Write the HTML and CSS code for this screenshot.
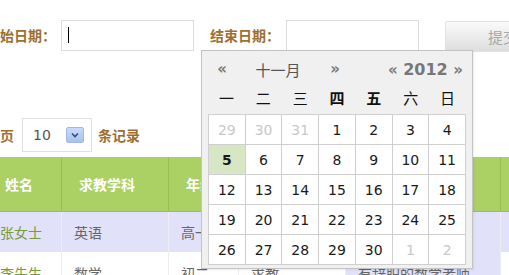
FILE: index.html
```html
<!DOCTYPE html>
<html lang="zh-CN">
<head>
    <meta charset="UTF-8">
    <title>求教信息</title>
    <link rel="stylesheet" href="styles.css">
</head>
<body>
    <div class="page">
        <!-- 查询条件 -->
        <form class="search">
            <label class="lbl">开始日期：</label>
            <span class="field">
                <input type="text" class="date-input">
                <span class="caret"></span>
            </span>
            <label class="lbl lbl-end">结束日期：</label>
            <input type="text" class="date-input date-end">
            <button type="button" class="btn">提交</button>
        </form>

        <!-- 每页条数 -->
        <div class="pager">
            <span class="lbl">每页</span>
            <div class="select">
                <span class="select-val">10</span>
                <span class="select-arrow">
                    <svg width="8" height="6" viewBox="0 0 8 6"><path d="M1 1.5 L4 4.5 L7 1.5" fill="none" stroke="#2b4f8a" stroke-width="1.6"/></svg>
                </span>
            </div>
            <span class="lbl">条记录</span>
        </div>

        <!-- 列表 -->
        <table class="list">
            <thead>
                <tr>
                    <th class="c1">姓名</th>
                    <th class="c2">求教学科</th>
                    <th class="c3">年级</th>
                    <th class="c4">地区</th>
                    <th class="c5">需求说明</th>
                    <th class="c6">操作</th>
                </tr>
            </thead>
            <tbody>
                <tr class="alt">
                    <td class="name">张女士</td>
                    <td>英语</td>
                    <td>高一</td>
                    <td>海淀</td>
                    <td>周末上门辅导</td>
                    <td>查看</td>
                </tr>
                <tr>
                    <td class="name">李先生</td>
                    <td>数学</td>
                    <td>初二</td>
                    <td>求教</td>
                    <td class="hl">有辞职的数学老师</td>
                    <td>查看</td>
                </tr>
            </tbody>
        </table>
    </div>

    <!-- 日期选择弹层 -->
    <div class="datepicker">
        <div class="dp-head">
            <span class="dp-prev">&laquo;</span>
            <span class="dp-month">十一月</span>
            <span class="dp-next">&raquo;</span>
            <span class="dp-year"><b class="dp-arr">&laquo;</b> 2012 <b class="dp-arr">&raquo;</b></span>
        </div>
        <div class="dp-week">
            <span>一</span><span>二</span><span>三</span><span class="strong">四</span><span class="strong">五</span><span>六</span><span>日</span>
        </div>
        <table class="dp-days">
            <tr><td class="other">29</td><td class="other">30</td><td class="other">31</td><td>1</td><td>2</td><td>3</td><td>4</td></tr>
            <tr><td class="today">5</td><td>6</td><td>7</td><td>8</td><td>9</td><td>10</td><td>11</td></tr>
            <tr><td>12</td><td>13</td><td>14</td><td>15</td><td>16</td><td>17</td><td>18</td></tr>
            <tr><td>19</td><td>20</td><td>21</td><td>22</td><td>23</td><td>24</td><td>25</td></tr>
            <tr><td>26</td><td>27</td><td>28</td><td>29</td><td>30</td><td class="other">1</td><td class="other">2</td></tr>
        </table>
    </div>
</body>
</html>
```

FILE: styles.css
```css
* {
    box-sizing: border-box;
    margin: 0;
    padding: 0;
}
body {
    font-family: "Noto Sans CJK SC", sans-serif;
    font-size: 14px;
    color: #666;
    background: #fff;
    overflow: hidden;
    width: 509px;
    height: 275px;
    position: relative;
}
.page {
    margin-left: -14px;
    padding-top: 20px;
}
.lbl {
    color: #9f6f2f;
    font-weight: bold;
    font-size: 14px;
    white-space: nowrap;
}
.search {
    display: flex;
    align-items: center;
    height: 30px;
}
.field {
    position: relative;
    margin-left: 5px;
}
.date-input {
    display: block;
    width: 133px;
    height: 31px;
    border: 1px solid #dcdcdc;
    background: #fff;
    outline: none;
}
.caret {
    position: absolute;
    left: 7px;
    top: 7px;
    width: 1px;
    height: 16px;
    background: #000;
}
.lbl-end {
    margin-left: 16px;
}
.date-end {
    margin-left: 6px;
}
.btn {
    margin-left: 26px;
    margin-top: 3px;
    height: 31px;
    width: 110px;
    padding-left: 42px;
    text-align: left;
    border: 1px solid #e2e2e2;
    border-radius: 2px;
    background: linear-gradient(#fafafa, #dedede);
    color: #a8a8a8;
    font-family: "Noto Sans CJK SC", sans-serif;
    font-size: 15px;
    white-space: nowrap;
}
.pager {
    display: flex;
    align-items: center;
    margin-top: 68px;
    height: 34px;
}
.select {
    display: flex;
    align-items: center;
    width: 70px;
    height: 34px;
    margin: 0 6px 0 8px;
    border: 1px solid #e0e0e0;
    background: #fff;
}
.select-val {
    font-family: "DejaVu Sans", sans-serif;
    font-size: 14px;
    color: #555;
    padding-left: 10px;
    width: 43px;
}
.select-arrow {
    width: 18px;
    height: 16px;
    display: flex;
    align-items: center;
    justify-content: center;
    background: linear-gradient(#c9dbf7, #a8c2ec);
    border: 1px solid #a2badf;
    border-radius: 2px;
}
.list {
    border-collapse: collapse;
    margin-top: 5px;
    margin-left: 1px;
    table-layout: fixed;
    width: 620px;
}
.list .c1 { width: 74px; }
.list .c2 { width: 107px; }
.list .c3 { width: 70px; }
.list .c4 { width: 107px; }
.list .c5 { width: 155px; }
.list .c6 { width: 107px; }
.list th {
    height: 54px;
    background: #abd063;
    color: #fff;
    font-size: 14px;
    font-weight: bold;
    text-align: left;
    padding-left: 17px;
    border-left: 1px solid #97bf4f;
    border-bottom: 1px solid #99c052;
}
.list td {
    height: 41px;
    padding-left: 12px;
    border-left: 1px solid #ececf2;
    white-space: nowrap;
    overflow: hidden;
}
.list tr.alt td {
    background: #e1e1f9;
}
.list td.hl {
    background: #e1e1f9;
}
.list td.name {
    color: #789a38;
}
.datepicker {
    position: absolute;
    left: 201px;
    top: 50px;
    width: 272px;
    height: 219px;
    padding: 6px;
    background: #f0f0f0;
    border: 1px solid #c3c3c3;
    box-shadow: 1px 1px 2px rgba(0, 0, 0, 0.08);
}
.dp-head {
    display: flex;
    align-items: center;
    height: 24px;
    color: #777;
}
.dp-prev,
.dp-next,
.dp-arr {
    font-family: "DejaVu Sans", sans-serif;
    font-weight: bold;
    font-size: 15px;
    color: #7a7a7a;
}
.dp-prev {
    width: 28px;
    text-align: center;
}
.dp-month {
    width: 84px;
    text-align: center;
    font-size: 15px;
    color: #555;
}
.dp-next {
    width: 30px;
    text-align: center;
}
.dp-year {
    flex: 1;
    text-align: right;
    padding-right: 3px;
    font-family: "DejaVu Sans", sans-serif;
    font-weight: bold;
    font-size: 16px;
    color: #777;
}
.dp-week {
    display: flex;
    height: 33px;
    align-items: center;
}
.dp-week span {
    width: 37px;
    text-align: center;
    font-size: 15px;
    color: #111;
}
.dp-week span.strong {
    font-weight: bold;
}
.dp-days {
    border-collapse: collapse;
    background: #fff;
}
.dp-days td {
    width: 37px;
    height: 30px;
    padding: 0;
    border: 1px solid #cfcfcf;
    text-align: center;
    font-family: "DejaVu Sans", sans-serif;
    font-size: 14px;
    color: #1a1a1a;
}
.dp-days td.other {
    color: #c8c8c8;
}
.dp-days td.today {
    background: #d8e7c3;
    font-weight: bold;
}
```
